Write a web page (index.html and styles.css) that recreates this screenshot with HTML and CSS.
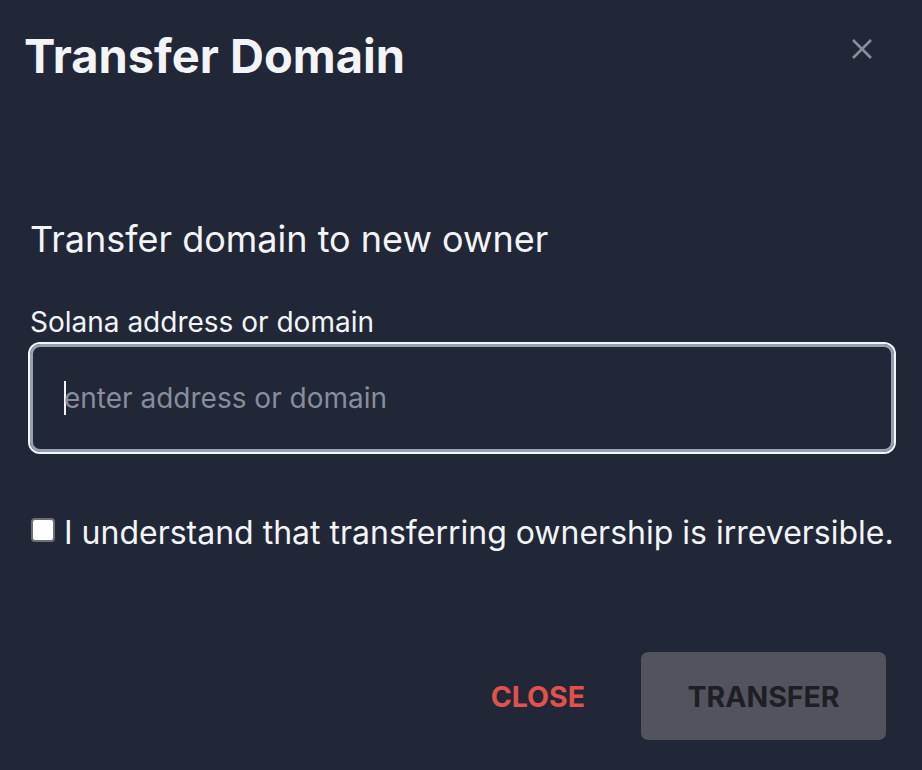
FILE: index.html
```html
<!DOCTYPE html>
<html lang="en">
<head>
<meta charset="utf-8">
<title>Transfer Domain</title>
<link rel="stylesheet" href="styles.css">
</head>
<body>
<div class="dialog">
  <div class="header">
    <h1 class="title">Transfer Domain</h1>
    <button class="icon-close" aria-label="Close">
      <svg width="24" height="24" viewBox="0 0 24 24"><path d="M3 3 L21 21 M21 3 L3 21" stroke="#8a8d94" stroke-width="2.6" stroke-linecap="butt" fill="none"/></svg>
    </button>
  </div>
  <div class="content">
    <h2 class="subtitle">Transfer domain to new owner</h2>
    <label class="label">Solana address or domain</label>
    <div class="input"><span class="caret"></span><span class="placeholder">enter address or domain</span></div>
    <div class="check-row">
      <span class="checkbox"></span>
      <span class="check-text">I understand that transferring ownership is irreversible.</span>
    </div>
  </div>
  <div class="actions">
    <button class="btn-close">CLOSE</button>
    <button class="btn-transfer">TRANSFER</button>
  </div>
</div>
</body>
</html>
```
FILE: styles.css
```css
* { box-sizing: border-box; }
html, body { margin: 0; padding: 0; }
body {
  background: #212736;
  font-family: Inter, "Noto Sans", sans-serif;
  width: 922px;
  height: 770px;
  overflow: hidden;
}
.dialog {
  padding: 26px 24px 29px 24px;
}
.header {
  display: flex;
  justify-content: space-between;
  align-items: flex-start;
}
.title {
  margin: 0;
  font-size: 47px;
  line-height: 60px;
  font-weight: 700;
  color: #f3f4f8;
}
.icon-close {
  background: none;
  border: 0;
  padding: 0;
  margin: 11px 24px 0 0;
  width: 24px;
  height: 24px;
}
.icon-close svg { display: block; }
.content {
  padding: 0 4px 0 6px;
  margin-top: 131px;
}
.subtitle {
  margin: 0;
  font-size: 36px;
  line-height: 44px;
  font-weight: 400;
  color: #f3f4f8;
}
.label {
  display: block;
  margin-top: 45px;
  font-size: 28px;
  line-height: 32px;
  color: #f3f4f8;
}
.input {
  margin-top: 6px;
  height: 108px;
  border: 3px solid #94a0b4;
  border-radius: 10px;
  box-shadow: 0 0 0 2px #f5f6f8;
  display: flex;
  align-items: center;
  padding-left: 31px;
}
.caret {
  width: 2px;
  height: 34px;
  background: #f3f4f8;
  margin-right: -2px;
}
.placeholder {
  font-size: 28px;
  color: #878d9b;
}
.check-row {
  margin-top: 63px;
  display: flex;
  align-items: flex-start;
  gap: 9px;
}
.checkbox {
  width: 24px;
  height: 24px;
  margin-top: 3px;
  margin-left: 1px;
  background: #fff;
  border: 2px solid #6e6f73;
  border-radius: 4px;
}
.check-text {
  font-size: 32px;
  line-height: 36px;
  color: #f3f4f8;
}
.actions {
  margin-top: 101px;
  display: flex;
  justify-content: flex-end;
  padding-right: 12px;
}
.actions button {
  font-family: Inter, "Noto Sans", sans-serif;
  font-size: 28.5px;
  font-weight: 700;
  border: 0;
  height: 88px;
}
.btn-close {
  background: none;
  color: #e0524b;
  padding: 0 56px 0 20px;
}
.btn-transfer {
  width: 245px;
  background: #52535c;
  color: #1e1f24;
  border-radius: 7px;
}
```
